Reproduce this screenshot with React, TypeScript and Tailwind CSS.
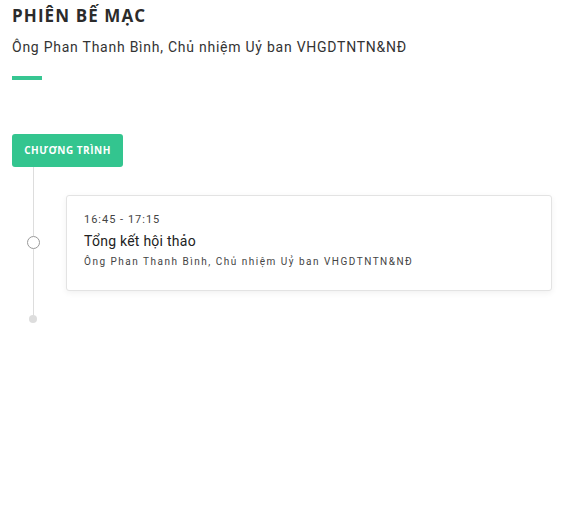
export default function App() {
  return (
    <div className="w-[580px] h-[524px] bg-white overflow-hidden" style={{ fontFamily: "Roboto, 'Noto Sans', sans-serif" }}>
      <div className="pl-3 pt-[5px]">
        <h2 className="text-[17px] leading-[22px] font-bold tracking-[1.1px] text-[#2b2b2b]" style={{ fontFamily: "'Open Sans', sans-serif" }}>
          PHIÊN BẾ MẠC
        </h2>
        <p className="mt-[11px] text-[14px] leading-[18px] tracking-[0.75px] text-[#333]">
          Ông Phan Thanh Bình, Chủ nhiệm Uỷ ban VHGDTNTN&amp;NĐ
        </p>
        <div className="mt-[20px] w-[30px] h-[4px] bg-[#37c692]" />
      </div>

      <div className="pl-3 mt-[54px]">
        <div className="w-[111px] h-[33px] rounded-[3px] bg-[#33c58f] flex items-center justify-center text-white text-[10px] font-bold tracking-[0.5px]" style={{ fontFamily: "'Open Sans', sans-serif" }}>
          CHƯƠNG TRÌNH
        </div>
        <div className="flex">
          <div className="w-[42px] flex flex-col items-center">
            <div className="w-px h-[69px] bg-[#ddd]" />
            <div className="w-[13px] h-[13px] rounded-full border border-[#999] bg-white" />
            <div className="w-px h-[68px] bg-[#ddd]" />
            <div className="w-[8px] h-[8px] rounded-full bg-[#ddd] -mt-[2px]" />
          </div>
          <div className="ml-[12px] mt-[28px] w-[486px] h-[96px] border border-[#e3e3e3] rounded-[3px] bg-white shadow-[0_2px_6px_rgba(0,0,0,0.06)] pl-[17px] pt-[17px]">
            <div className="text-[11px] leading-[14px] tracking-[1px] text-[#444]">16:45 - 17:15</div>
            <div className="mt-[5px] text-[14px] leading-[18px] tracking-[0.25px] text-[#222]">Tổng kết hội thảo</div>
            <div className="mt-[5px] text-[10px] leading-[13px] tracking-[1.5px] text-[#444]">Ông Phan Thanh Bình, Chủ nhiệm Uỷ ban VHGDTNTN&amp;NĐ</div>
          </div>
        </div>
      </div>
    </div>
  );
}
